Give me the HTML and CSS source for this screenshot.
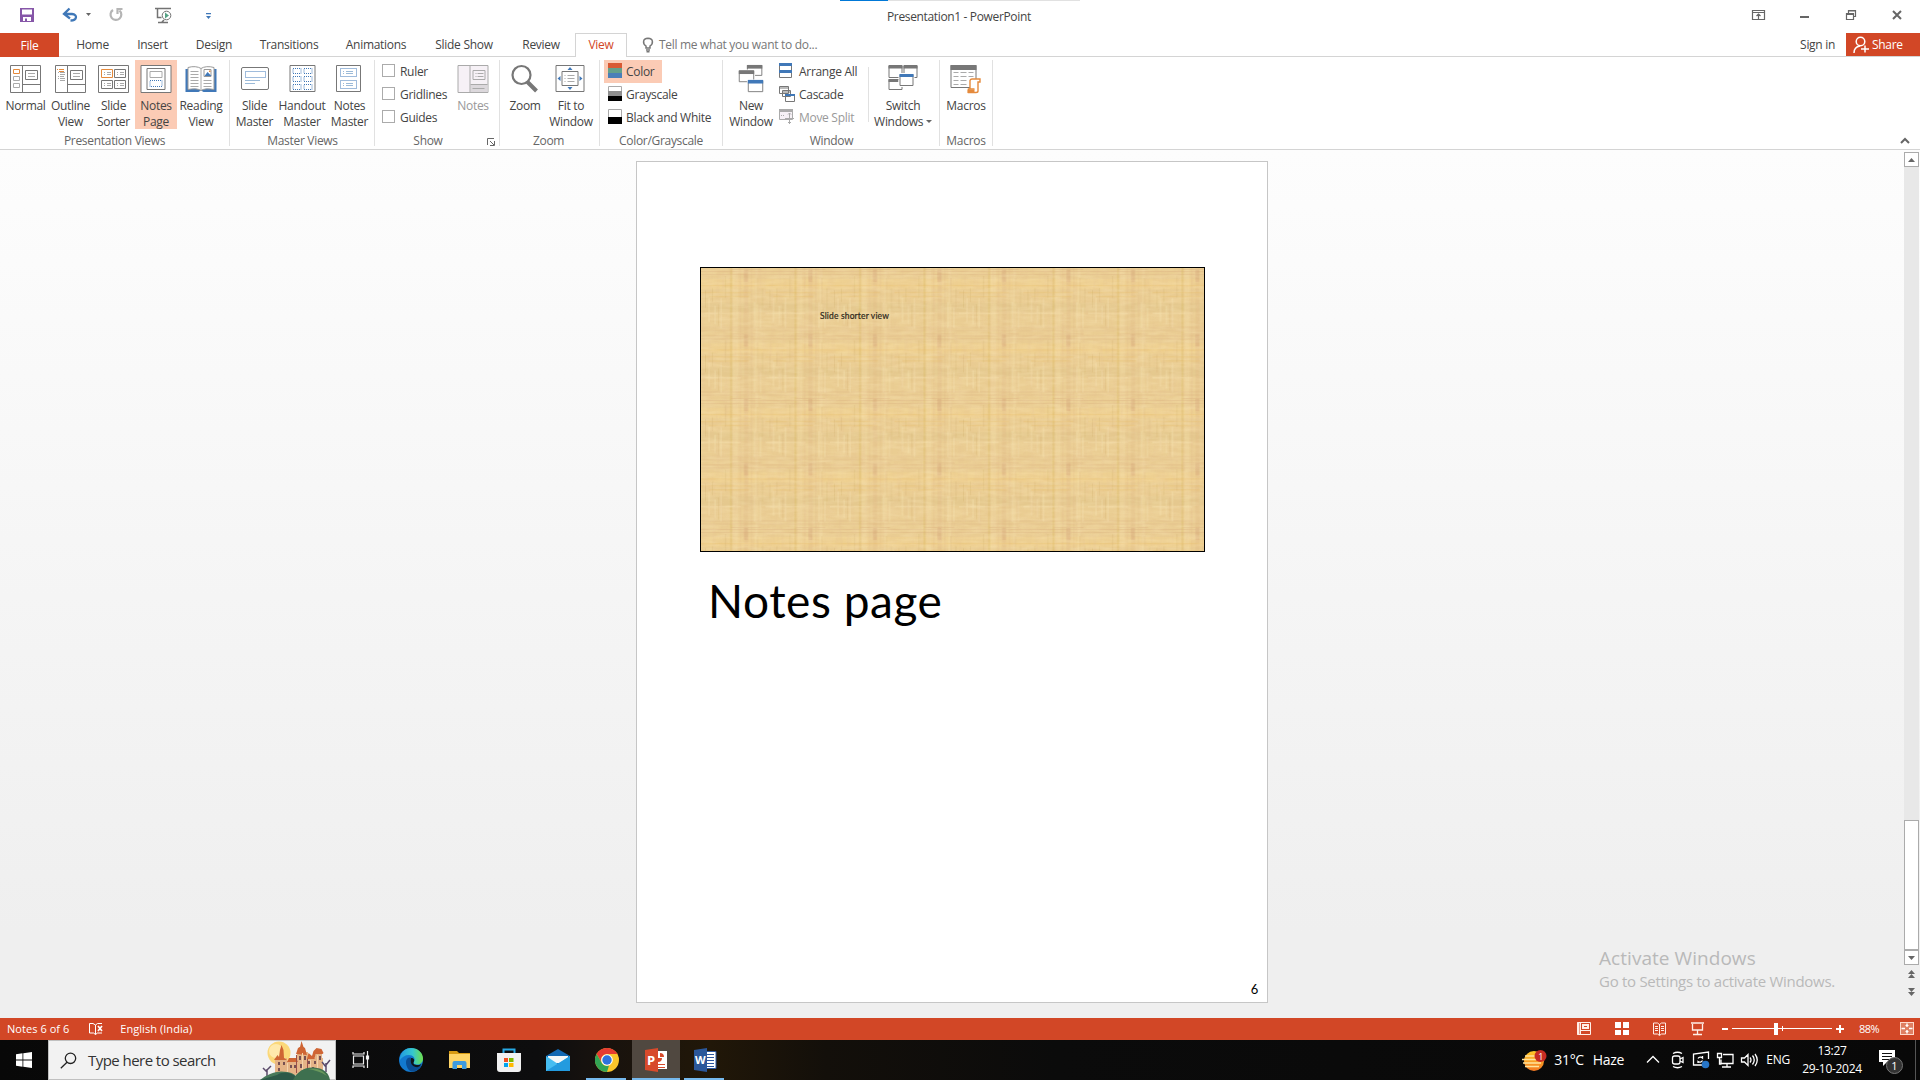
FILE: index.html
```html
<!DOCTYPE html>
<html lang="en">
<head>
<meta charset="utf-8">
<title>Presentation1 - PowerPoint</title>
<link rel="stylesheet" href="styles.css">
</head>
<body>
<div class="app">
  <header class="titlebar">
    <svg class="quick" width="240" height="33" viewBox="0 0 240 33">
      <path fill="#8656a8" fill-rule="evenodd" d="M20 8h14v14H20zM22 9.500v5h10v-5zM23 17v4h2v-2.500h2V21h4v-4z"/>
      <path d="M65 14h7c6 .5 5 6.500-1.500 6.500M69.500 8.500L64 14l6 4.500" fill="none" stroke="#4078b8" stroke-width="2.300"/>
      <path d="M86 13h5l-2.500 3z" fill="#666"/>
      <path d="M113 10a5.400 5.400 0 1 0 6.500 0.500M117.500 14V9h5" fill="none" stroke="#b5b5b5" stroke-width="2.200"/>
      <path d="M155 8.500h16M157.500 9v8.500h4M158 22.500h10M162 22l2-2" fill="none" stroke="#737373" stroke-width="1.500"/>
      <circle cx="166.500" cy="15.500" r="4.300" fill="#fff" stroke="#737373"/><path d="M165 12.500l4 3-4 3z" fill="#56a285"/>
      <path d="M206 13h5v1.200h-5zM206 16h5l-2.500 3z" fill="#4078b8"/>
    </svg>
    <div class="loadbar"><i></i></div>
    <div class="doc-title">Presentation1 - PowerPoint</div>
    <svg class="winbtns" width="170" height="33" viewBox="1750 0 170 33" fill="none" stroke="#666" stroke-width="1.200">
      <path d="M1752.500 10.500h12v9h-12zM1752.500 12.500h12M1758.500 19v-5M1756.500 16l2-2 2 2"/>
      <path d="M1800 17h9" stroke-width="2"/>
      <path d="M1846.500 13.500h7v6h-7zM1846 14.500h8M1848.500 13v-2.500h7v6h-2M1848 11h8"/>
      <path d="M1893 11l8 8M1901 11l-8 8" stroke-width="2"/>
    </svg>
  </header>

  <nav class="tabs">
    <div class="file">File</div>
    <div class="tab w59 first">Home</div><div class="tab w61">Insert</div><div class="tab w62">Design</div><div class="tab w88">Transitions</div><div class="tab w86">Animations</div><div class="tab w90">Slide Show</div><div class="tab w64">Review</div><div class="tab active">View</div>
    <svg class="bulb" width="12" height="16" viewBox="0 0 12 16" fill="none" stroke="#777" stroke-width="1.500"><path d="M4 11V9C.5 6.500.500 1.500 6 1.300c5.500.2 5.500 5.200 2 7.700v2zM4 13h4M4.500 14.700h3"/></svg>
    <span class="tell">Tell me what you want to do...</span>
    <span class="signin">Sign in</span>
    <div class="share"><svg width="17" height="18" viewBox="0 0 17 18" fill="none" stroke="#fff" stroke-width="1.500"><circle cx="7.500" cy="5.500" r="4.300"/><path d="M1 17c0-4 2.500-6.500 6-7M8 13h8M12 9.500v7"/></svg>Share</div>
  </nav>

  <section class="ribbon">
    <div class="group g-views">
      <div class="items">
        <div class="big w47"><svg class="ic" width="31" height="28" viewBox="0 0 31 28"><g fill="none" stroke="#777"><path d="M.5.500h30v27H.5zM12.500 1v26M13 19.500h17"/><path d="M15.500 5.500h12v9h-12z"/><path d="M18 8.500h7M18 11.500h7" stroke="#aaa"/><path d="M3.500 4.500h6v4h-6z" stroke="#e58a3c"/><path d="M3.500 11.500h6v4h-6zM3.500 18.500h6v4h-6z" stroke="#aaa"/></g></svg><span>Normal</span></div>
        <div class="big w43"><svg class="ic" width="31" height="28" viewBox="0 0 31 28"><g fill="none" stroke="#777"><path d="M.5.500h30v27H.5zM12.500 1v26M13 19.500h17M15.500 5.500h12v9h-12z"/><path d="M18 8.500h7M18 11.500h7M3 7.500h1M5 7.500h5M5 9.500h5M3 11.500h1M5 11.500h4M3 13.500h1M5 13.500h5M5 15.500h5" stroke="#aaa"/><path d="M2 4.500h1M4 4.500h5M4 6.500h5" stroke="#e58a3c"/></g></svg><span>Outline<br>View</span></div>
        <div class="big w43"><svg class="ic" width="31" height="28" viewBox="0 0 31 28"><g fill="none" stroke="#777"><path d="M.5.500h30v27H.5zM16.500 4.500h11v8h-11zM3.500 15.500h11v8h-11zM16.500 15.500h11v8h-11z"/><path d="M3.500 4.500h11v8h-11z" stroke="#e58a3c"/><path d="M6 7.500h1M9 7.500h4M6 9.500h1M9 9.500h4M19 7.500h1M22 7.500h4M19 9.500h1M22 9.500h4M6 18.500h1M9 18.500h4M6 20.500h1M9 20.500h4M19 18.500h1M22 18.500h4M19 20.500h1M22 20.500h4" stroke="#aaa"/></g></svg><span>Slide<br>Sorter</span></div>
        <div class="big w42 on half"><svg class="ic" width="31" height="28" viewBox="0 0 31 28"><g fill="#fff" stroke="#777"><path d="M.5.500h30v27H.5z"/><path d="M6.500 3.500h18v21h-18z"/><path d="M9.500 6.500h12v6h-12z" stroke="#aaa"/><path d="M9.500 15.500h12v6h-12z" stroke="#4078b8" stroke-dasharray="1 1"/></g></svg><span>Notes<br>Page</span></div>
        <div class="big w48 half"><svg class="ic" width="31" height="28" viewBox="0 0 31 28"><path d="M0 4h31v23H18l-2.500-1.500L13 27H0z" fill="#4078b8"/><path d="M2.500 2.500c5-1.500 10-1 13 1 3-2 8-2.500 13-1v22c-5-1-10-1-13 1-3-2-8-2-13-1z" fill="#fff" stroke="#999"/><path d="M15.500 3v22M5 6.500h8M5 9.500h8M5 12.500h8M5 15.500h8M5 18.500h8M5 21.500h8M18 15.500h8M18 18.500h8M18 21.500h8" stroke="#aaa"/><path d="M18.500 4.500h7v7h-7z" fill="#fff" stroke="#999"/><path d="M19 11l3-4 4 4z" fill="#4078b8"/><path d="M23.500 5.500h1.500v1.500h-1.500z" fill="#e58a3c"/></svg><span>Reading<br>View</span></div>
      </div><div class="caption views-cap">Presentation Views</div>
    </div>
    <div class="group g-master">
      <div class="items">
        <div class="big w47"><svg class="ic" width="31" height="28" viewBox="0 0 31 28"><g fill="none" stroke="#777"><rect x="2.500" y="2.500" width="27" height="22" rx="1.500"/><path d="M6.500 6.500h20v6h-20z" stroke="#4078b8" stroke-dasharray="1 1"/><path d="M6 15.500h15M6 18.500h10" stroke="#9bbad8"/></g></svg><span>Slide<br>Master</span></div>
        <div class="big w48 half"><svg class="ic" width="31" height="28" viewBox="0 0 31 28"><g fill="none" stroke="#777"><path d="M3.500.500h25v26h-25z"/><path d="M6.500 3.500h8v5h-8zM17.500 3.500h8v5h-8zM6.500 11.500h8v5h-8zM17.500 11.500h8v5h-8zM6.500 19.500h8v5h-8zM17.500 19.500h8v5h-8z" stroke="#4078b8" stroke-dasharray="1 1"/></g></svg><span>Handout<br>Master</span></div>
        <div class="big w47"><svg class="ic" width="31" height="28" viewBox="0 0 31 28"><g fill="none" stroke="#777"><path d="M2.500.500h24v26h-24z"/><path d="M6.500 3.500h16v8h-16zM6.500 15.500h16v8h-16z" stroke="#4078b8" stroke-dasharray="1 1"/><path d="M9 6.500h1M12 6.500h7M9 8.500h1M12 8.500h7M9 18.500h1M12 18.500h7M9 20.500h1M12 20.500h7" stroke="#9bbad8"/></g></svg><span>Notes<br>Master</span></div>
      </div><div class="caption">Master Views</div>
    </div>
    <div class="group g-show">
      <div class="items">
        <div class="checks"><label><i></i>Ruler</label><label><i></i>Gridlines</label><label><i></i>Guides</label></div>
        <div class="big w48 off half"><svg class="ic" width="31" height="28" viewBox="0 0 31 28"><path d="M.5.500h30v27H.5z" fill="#f6f1f6" stroke="#aaa"/><path d="M13 20h17v7H13z" fill="#dcd8dc"/><g fill="none" stroke="#aaa"><path d="M12.500 1v26M13 19.500h17M15.500 5.500h12v9h-12zM18 8.500h1M20 8.500h6M18 11.500h1M20 11.500h6M15 23.500h12"/></g></svg><span>Notes</span></div>
      </div><div class="caption show-cap">Show<svg class="launch" width="8" height="8" viewBox="0 0 8 8" fill="none" stroke="#666"><path d="M.5 7V.500H7M3 3l4 4M7.500 3v4.500H3"/></svg></div>
    </div>
    <div class="group g-zoom">
      <div class="items">
        <div class="big w46 half"><svg class="ic" width="31" height="28" viewBox="0 0 31 28" fill="none" stroke="#777"><circle cx="12" cy="10" r="9" stroke-width="2.200"/><path d="M18 17l9 9" stroke-width="4"/></svg><span>Zoom</span></div>
        <div class="big w46 half"><svg class="ic" width="31" height="28" viewBox="0 0 31 28"><path d="M.5.500h28v26h-28zM6.500 6.500h16v14h-16z" fill="none" stroke="#777"/><path d="M9 10.500h1M12 10.500h7M9 13.500h1M12 13.500h7M9 16.500h1M12 16.500h7" stroke="#aaa"/><path d="M12 5h5l-2.500-3zM12 22h5l-2.500 3zM5 11v5l-3-2.500zM24 11v5l3-2.500z" fill="#4078b8"/></svg><span>Fit to<br>Window</span></div>
      </div><div class="caption">Zoom</div>
    </div>
    <div class="group g-color">
      <div class="items rows">
        <div class="small on"><svg width="14" height="15"><path fill="#d85a34" d="M0 0h14v5H0z"/><path fill="#63a08b" d="M0 5h14v5H0z"/><path fill="#4a7fb8" d="M0 10h14v5H0z"/></svg>Color</div>
        <div class="small"><svg width="14" height="15"><path fill="#fff" stroke="#aaa" d="M.5.500h13v5H.5z"/><path fill="#8e8e8e" d="M0 5h14v5H0z"/><path d="M0 10h14v5H0z"/></svg>Grayscale</div>
        <div class="small"><svg width="14" height="15"><path fill="#fff" stroke="#aaa" d="M.5.500h13v8H.5z"/><path d="M0 8h14v7H0z"/></svg>Black and White</div>
      </div><div class="caption">Color/Grayscale</div>
    </div>
    <div class="group g-window">
      <div class="items">
        <div class="big w54 half"><svg class="ic" width="31" height="31" viewBox="0 0 31 31"><g fill="#fff" stroke="#777"><path d="M11.500.500h16v11h-16z"/><path d="M11 2h17" stroke-width="4"/><path d="M2.500 6.500h16v12h-16z" stroke="#fff" stroke-width="3"/><path d="M2.500 6.500h16v12h-16z"/><path d="M2 8h17" stroke-width="4"/><path d="M12.500 17.500h16v12h-16z" stroke="#fff" stroke-width="3"/><path d="M12.500 17.500h16v12h-16z"/><path d="M12 18.500h17" stroke="#4078b8" stroke-width="4"/></g></svg><span>New<br>Window</span></div>
        <div class="rows winrows">
          <div class="small"><svg width="15" height="15" fill="#fff" stroke="#777"><path d="M.5 0.500h12v14h-12z"/><path d="M0 1.500h13M0 8.500h13" stroke="#4078b8" stroke-width="3"/></svg>Arrange All</div>
          <div class="small"><svg width="16" height="16" fill="#fff" stroke="#777"><path d="M.5.500h9v7h-9zM.5 2h9M3.500 4.500h8v6h-8zM3.500 6h8M6.500 8.500h9v7h-9z"/><path d="M6 9h10" stroke="#4078b8" stroke-width="2"/></svg>Cascade</div>
          <div class="small off"><svg width="16" height="16" fill="#f6f1f6" stroke="#aaa"><path d="M.5.500h13v10H.5z"/><path d="M0 1.500h14" stroke-width="3"/><path d="M10.500 4v11M6 9.500h9M2 6.500h1M4 6.500h1M9 5.500l1.500-1.500 1.500 1.500M9 13l1.500 1.500 1.500-1.500"/></svg>Move Split</div>
        </div>
        <div class="vsep"></div>
        <div class="big w68"><svg class="ic" width="31" height="28" viewBox="0 0 31 28"><g fill="#fff" stroke="#777"><path d="M1.500.500h13v12h-13zM16.500.500h13v12h-13z"/><path d="M1 2h14M16 2h14" stroke-width="3"/><path d="M1.500 14.500h13v10h-13z"/><path d="M1 15.500h10" stroke-width="3"/><path d="M12.500 9.500h13v11h-13z" stroke="#fff" stroke-width="3"/><path d="M12.500 9.500h13v11h-13z"/><path d="M12 10.500h14" stroke="#4078b8" stroke-width="3"/></g></svg><span>Switch<br>Windows <b class="drop"></b></span></div>
      </div><div class="caption">Window</div>
    </div>
    <div class="group g-macros">
      <div class="items"><div class="big w52 half"><svg class="ic" width="31" height="28" viewBox="0 0 31 28"><path d="M.5.500h25v22H.5z" fill="#fff" stroke="#777"/><path d="M0 2.500h26" stroke="#777" stroke-width="5"/><path d="M3 7.500h5M10 7.500h6M18 7.500h5M3 11.500h5M10 11.500h6M18 11.500h5M3 15.500h5M10 15.500h6M3 19.500h5M10 19.500h6" stroke="#aaa"/><path d="M19.500 24V15.500c.5-1.500 1-1.500 2-1.500h8v3h-2v9c0 1-1 1.500-2 1.500h-7.500V24h6" fill="#fff" stroke="#e58a3c" stroke-width="1.400"/><path d="M17 24.500h7V28h-7z" fill="#e58a3c"/></svg><span>Macros</span></div></div>
      <div class="caption">Macros</div>
    </div>
    <svg class="collapse" width="10" height="7" viewBox="0 0 10 7"><path d="M1 6l4-4 4 4" fill="none" stroke="#666" stroke-width="2"/></svg>
  </section>

  <main class="workspace">
    <div class="page">
      <div class="slide">
        <svg class="weave" width="503" height="283">
          <defs>
            <filter id="warp" x="0" y="0" width="100%" height="100%"><feTurbulence type="fractalNoise" baseFrequency=".26 .04" numOctaves="2" seed="4"/><feColorMatrix values="0 0 0 0 .78  0 0 0 0 .53  0 0 0 0 .28  0 1.900 0 0 -.7"/></filter>
            <filter id="weft" x="0" y="0" width="100%" height="100%"><feTurbulence type="fractalNoise" baseFrequency=".06 .28" numOctaves="2" seed="8"/><feColorMatrix values="0 0 0 0 1  0 0 0 0 .86  0 0 0 0 .54  0 2.200 0 0 -.8"/></filter>
            <pattern id="cloth" width="64.500" height="64.500" patternUnits="userSpaceOnUse">
              <path fill="#eacd92" d="M0 0h65v65H0z"/>
              <path fill="#dfc58a" opacity=".5" d="M0 35h65v9H0z"/><path fill="#f5d58e" opacity=".4" d="M0 11h65v10H0z"/>
              <path fill="#dcae80" opacity=".25" d="M43 0h4v65h-4zM39 0h1v65h-1zM50 0h1v65h-1z"/><path fill="#d6b35c" opacity=".35" d="M29 0h2v65h-2z"/><path fill="#f2dda5" opacity=".35" d="M32 0h5v65h-5zM54 0h3v65h-3z"/>
              <path fill="#c98f6a" opacity=".22" d="M43 2h4v12h-4z"/>
              <path fill="none" stroke="#d9a97a" opacity=".3" d="M0 3.500h65M0 6.500h65M0 59.500h65M0 62.500h65M30 1.500h30"/>
              <path fill="none" stroke="#e9b860" opacity=".4" d="M0 17.500h65M0 24.500h50M8 28.500h40"/>
              <path fill="none" stroke="#f6e4b4" opacity=".5" d="M8 30v24M14 38v18M20 30v30M53.500 34v26M59.500 40v20M0 45.500h40"/>
              <path fill="none" stroke="#cfae66" opacity=".3" d="M4.500 22v18M11.500 20v14M17.500 36v22M24.500 8v22M56.500 10v26M61.500 20v20"/>
            </pattern>
          </defs>
          <rect width="503" height="283" fill="url(#cloth)"/>
          <rect width="503" height="283" filter="url(#warp)" opacity=".3"/>
          <rect width="503" height="283" filter="url(#weft)" opacity=".22"/>
        </svg>
        <div class="slide-text">Slide shorter view</div>
      </div>
      <div class="notes">Notes page</div>
      <div class="pagenum">6</div>
    </div>
    <div class="activate"><p class="a1">Activate Windows</p><p class="a2">Go to Settings to activate Windows.</p></div>
    <div class="scroll">
      <div class="sbtn"><svg width="7" height="4"><path d="M0 4l3.500-4L7 4z" fill="#666"/></svg></div>
      <div class="track"></div><div class="thumb"></div>
      <div class="sbtn"><svg width="7" height="4"><path d="M0 0l3.500 4L7 0z" fill="#666"/></svg></div>
      <svg class="pg" width="15" height="34" fill="#666"><path d="M4 9l3.500-4L11 9zM4 13l3.500-4L11 13zM4 23l3.500 4L11 23zM4 27l3.500 4L11 27z"/></svg>
    </div>
  </main>

  <footer class="status">
    <span class="st1">Notes 6 of 6</span>
    <svg class="proof" width="16" height="14" viewBox="0 0 16 14" fill="none" stroke="#fff"><path d="M6.500 12.500l-2-1.500H.500V1.500H4l2.500 1.500zM6.500 12.500l2-1.500H13M6.500 3l2-1.500H13"/><path d="M9 4l4 5M13 4L9 9" stroke-width="1.600"/></svg>
    <span class="st2">English (India)</span>
    <svg class="stright" width="350" height="22" viewBox="1570 0 350 22">
      <g fill="none" stroke="#ffeee7"><path d="M1577.500 4.500h13v12h-13zM1580.500 4v12.500M1581 12.500h10" /><path d="M1583 7h5v3h-5z" stroke-width="2"/><path d="M1578.500 4v13" stroke-width="2"/>
      <path d="M1659.500 6.500l-2-1.500h-4v11h4l2 1.500 2-1.500h4V5h-4zM1659.500 6v11M1655 8.500h3M1655 10.500h3M1655 12.500h3M1661 8.500h3M1661 10.500h3M1661 12.500h3"/>
      <path d="M1691 5h13M1692.500 6v6h10V6M1697.500 12v4M1693 16.500h9" stroke-width="1.300"/></g>
      <path fill="#fff" d="M1615 4h6v6h-6zM1623 4h6v6h-6zM1615 12h6v5h-6zM1623 12h6v5h-6zM1722 10h6v2h-6zM1732 10h100v1h-100zM1774 5h4v12h-4zM1782 8h1v5h-1zM1836 10h8v2h-8zM1839 7h2v8h-2z"/>
      <rect x="1900.500" y="4.500" width="13" height="12" fill="#df7f62" stroke="#ffd9cb"/><path d="M1907 5.500v3.500M1907 12v3.500M1901.500 10.500h3.500M1909 10.500h3.500" stroke="#fff" stroke-width="1.500"/><path d="M1905.500 7.500h3M1905.500 13.500h3" stroke="#fff"/>
    </svg>
    <span class="pct">88%</span>
  </footer>

  <div class="taskbar">
    <div class="start"><svg width="16" height="16" viewBox="0 0 16 16" fill="#fff"><path d="M0 2.200l6.500-.9v6.200H0zM7.300 1.200L16 0v7.500H7.300zM0 8.400h6.500v6.300L0 13.800zM7.300 8.400H16V16l-8.700-1.200z"/></svg></div>
    <div class="search">
      <svg class="mag" width="17" height="17" viewBox="0 0 17 17" fill="none" stroke="#222" stroke-width="1.300"><circle cx="10.500" cy="6.300" r="5.200"/><path d="M7 10.200L.8 16.200"/></svg>
      <span>Type here to search</span>
      <svg class="castle" width="74" height="39" viewBox="0 0 74 39">
        <circle cx="19" cy="12" r="11.500" fill="#fbd879"/><circle cx="16" cy="10" r="7" fill="#ffe9ac"/>
        <path fill="#e5b487" d="M15 17h12v16H15zM27 20h11v14H27zM37 11h11v22H37zM46 17h17v15H46zM39 6h5v9h-5zM55 10h7v12h-7z"/>
        <path fill="#cf6534" d="M14 19l3.500-5 1.500 2 1-7 1.500-5 2 5 .5 8 3 2zM36 13l2-6 2-1 1.500-6 2 6 1.500 1 2 7zM47 18l1.500-6 3.500 3 1.500-5 3-3 5 1 2 4-1 1h-7l-1 5zM27 21l2-4h7l2 4z"/>
        <path fill="#765052" d="M18 21h2v3h-2zM23 21h2v3h-2zM18 27h2v3h-2zM30 24h2v3h-2zM34 24h2v3h-2zM39 15h2v4h-2zM44 15h2v4h-2zM40 23h2v4h-2zM48 20h2v3h-2zM54 20h2v3h-2zM59 15h2v4h-2zM52 26h2v3h-2z"/>
        <path fill="#f4d4ac" d="M27 22h1v9h-1zM42 12h1v20h-1zM57 14h1v16h-1zM50 19h1v12h-1z"/>
        <path fill="#9b4f49" d="M36 14h1v18h-1zM47 18h1v13h-1z"/>
        <path d="M7 37v-9M7 31l-4-4M7 29l4-4M66 31v-9M66 26l-4-5M66 24l4-5" stroke="#5a4a6a" stroke-width="1.500" fill="none"/>
        <path fill="#47795a" d="M0 39c8-6 16-10 27-8 8 1 10 5 12 8z"/><path fill="#2d5948" d="M17 34c8-5 17-2 21 5H0z"/><path fill="#3e704f" d="M33 39c5-10 14-14 24-12 8 1 12 6 13 12z"/><path fill="#68985c" d="M48 28c8-2 15 1 19 7-6-4-12-6-19-7z"/>
      </svg>
    </div>
    <div class="apps">
      <div class="app-i tview"><svg width="18" height="18" viewBox="0 0 18 18" fill="none" stroke="#eee" stroke-width="1.200"><path d="M1.500 5h10v8h-10zM1 1v2h11V1M1 17v-2h11v2M15.500 0v17"/><path fill="#fff" d="M14.500 5h2v3h-2z"/></svg></div>
      <div class="app-i"><svg width="24" height="24" viewBox="0 0 24 24"><defs><linearGradient id="eg"><stop stop-color="#229be0"/><stop offset=".55" stop-color="#35c7cf"/><stop offset="1" stop-color="#70e04a"/></linearGradient></defs><circle cx="12" cy="12" r="12" fill="#1279cf"/><path fill="url(#eg)" d="M1 9C3 3 7 0 12 0c7 0 12 5 12 10.500 0 4-3 6-6 6-2 0-4-.8-3-2.500 2-4-1-7-5-7-4 0-7 2-9 5z"/><path fill="#0b4d93" d="M7 14c0-3 2-5 5-4.500-2 4 1 8.500 5 9 2 .3 4-.5 5.500-1C20 22 16 24 12 23.500 9 22 7 18 7 14z"/><path fill="#10151a" d="M12 10c3 0 4 2 2.600 4.200-.8 1.700 1 3 4 2.800 2 0 3-.5 4-1-2 3-4 3.500-6 3-4-1-6-5-4.600-9z"/></svg></div>
      <div class="app-i"><svg width="23" height="20" viewBox="0 0 23 20"><path fill="#d89b13" d="M1 1h8l2 2h11v5H1z"/><path fill="#ffd567" d="M1 4h21v14H1z"/><path fill="#3d9be0" d="M4.500 19v-6q0-2 2-2h10q2 0 2 2v6H14v-4H9v4z"/></svg></div>
      <div class="app-i"><svg width="24" height="24" viewBox="0 0 24 24"><path d="M6.500 6V1.500h11V6" fill="none" stroke="#27a9e5" stroke-width="2"/><path d="M0 5h24v16q0 3-3 3H3q-3 0-3-3z" fill="#f1f1f1"/><path fill="#f25022" d="M7 10h4v4H7z"/><path fill="#7fba00" d="M12 10h4.500v4H12z"/><path fill="#00a4ef" d="M7 15h4v4H7z"/><path fill="#ffb900" d="M12 15h4.500v4H12z"/></svg></div>
      <div class="app-i"><svg width="24" height="22" viewBox="0 0 24 22"><path fill="#1268b3" d="M0 7l12-7 12 7v14H0z"/><path fill="#f4f7f8" d="M2 7h20v7H2z"/><path fill="#46bdf1" d="M0 7l12 8 12-8v15H0z"/><path fill="#239bdf" d="M0 22L24 7v15z"/></svg></div>
      <div class="app-i run"><svg width="24" height="24" viewBox="0 0 24 24"><circle cx="12" cy="12" r="12" fill="#fac52b"/><path fill="#e63c31" d="M1.600 6A12 12 0 0 1 22.400 6H12a6 6 0 0 0-5.200 9z"/><path fill="#32a454" d="M1.600 6l5.200 9A6 6 0 0 0 12 18l2-.4L12 24A12 12 0 0 1 1.600 6z"/><circle cx="12" cy="12" r="5.800" fill="#fff"/><circle cx="12" cy="12" r="4.700" fill="#2f73dc"/></svg></div>
      <div class="app-i current"><svg width="24" height="24" viewBox="0 0 24 24"><path fill="#fff" d="M12 3h11v18H12z"/><path fill="#d74a2b" d="M14 16h7v1h-7zM14 19h7v1h-7zM14 6a4 4 0 1 0 4 4h-4zM16 5v4h4q0-4-4-4z"/><path fill="#d74a2b" d="M1 2l13-2v24L1 22z"/><text x="3" y="17" class="logo">P</text></svg></div>
      <div class="app-i run word"><svg width="24" height="24" viewBox="0 0 24 24"><path fill="#fff" stroke="#2c569f" d="M12 3.500h11v17H12z"/><path stroke="#2c569f" d="M14 6.500h7M14 9.500h7M14 12.500h7M14 15.500h7M14 18.500h7"/><path fill="#2b579a" d="M1 2l13-2v24L1 22z"/><text x="2" y="16" class="logo w">W</text></svg></div>
    </div>
    <div class="tray">
      <svg class="weather" width="26" height="24" viewBox="0 0 26 24"><defs><linearGradient id="sun" x2="0" y2="1"><stop stop-color="#ffc928"/><stop offset="1" stop-color="#f37822"/></linearGradient></defs><circle cx="12" cy="13" r="10" fill="url(#sun)"/><path d="M3 8h10M0 11.500h19M1 15h18M3 18.500h14" stroke="#ffe39c" stroke-width="1.500"/><circle cx="18.500" cy="8" r="6" fill="#c62c24"/><text x="16.200" y="11.500" class="badge">1</text></svg>
      <span class="temp">31°C</span><span class="haze">Haze</span>
      <svg class="sys" width="115" height="20" viewBox="1645 0 115 20" fill="none" stroke="#fff" stroke-width="1.300"><path d="M1647 12.500l6-6 6 6"/><rect x="1672.500" y="6" width="7.500" height="8" rx="2"/><path d="M1680 9l3-1.500v5l-3-1.500M1673 3.500q4.500-2.500 9 0M1673 16.500q4.500 2.500 9 0"/><path d="M1704 15h-10.500V4l15-2v7M1698 8.500a3 3 0 0 1 4.500-.5V6M1702.500 10.500a3 3 0 0 1-4.500 1v1.500"/><circle cx="1705.500" cy="14.500" r="3.800" fill="#2776c8" stroke="none"/><path d="M1723 4.500h10v9h-12v-4M1727 14v3M1722 17h9M1717.500 3.500h4v4h-4zM1719.500 8v6h2"/><path d="M1741.500 8v4h3l3.500 3.500v-11L1744.500 8zM1750 7.500q2 2.500 0 5M1752.500 5.500q3.500 4.500 0 9M1755 4q4.500 6 0 12"/></svg>
      <span class="eng">ENG</span>
      <div class="clock">13:27<br>29-10-2024</div>
      <svg class="notif" width="26" height="26" viewBox="0 0 26 26"><path fill="#fff" d="M0 1h16v12H8l-4 4v-4H0z"/><path stroke="#111" d="M3 4.500h10M3 7.500h10M3 10.500h7"/><circle cx="15.500" cy="16.500" r="8" fill="#333" stroke="#777"/><text x="12.300" y="21" class="count">1</text></svg>
      <i class="peek"></i>
    </div>
  </div>
</div>
</body>
</html>
```
FILE: styles.css
```css
* { box-sizing: border-box; }
body { margin: 0; background: #fff; font: 12px/16px "Open Sans", "Noto Sans", sans-serif; color: #444; letter-spacing: -0.3px; overflow: hidden; }
svg { display: block; flex: none; }
p { margin: 0; }
.app { width: 1920px; height: 1080px; display: flex; flex-direction: column; white-space: nowrap; }

.titlebar { height: 33px; display: flex; position: relative; }
.loadbar { position: absolute; left: 840px; top: 0; width: 240px; height: 1px; background: #e1e1e1; }
.loadbar i { display: block; width: 48px; height: 1px; background: #0078d7; }
.doc-title { margin-left: 647px; padding-top: 9px; letter-spacing: -0.35px; }
.winbtns { margin-left: auto; }

.tabs { height: 24px; display: flex; border-bottom: 1px solid #d4d4d4; }
.file { width: 59px; height: 24px; background: #d24726; color: #fff; text-align: center; line-height: 26px; }
.tab { text-align: center; line-height: 24px; }
.first { margin-left: 4px; }
.w59 { width: 59px; } .w61 { width: 61px; } .w62 { width: 62px; } .w88 { width: 88px; } .w86 { width: 86px; } .w90 { width: 90px; } .w64 { width: 64px; }
.tab.active { width: 52px; height: 24px; margin-left: 2px; line-height: 22px; color: #d24726; background: #fff; border: 1px solid #d4d4d4; border-bottom: 0; }
.bulb { margin: 4px 5px 0 15px; }
.tell { color: #777; line-height: 24px; }
.signin { margin-left: auto; margin-right: 11px; line-height: 24px; }
.share { width: 74px; height: 23px; background: #d24726; color: #fff; display: flex; align-items: center; padding-left: 7px; gap: 2px; }

.ribbon { height: 93px; display: flex; align-items: flex-start; padding-top: 3px; border-bottom: 1px solid #d4d4d4; }
.group { height: 86px; border-right: 1px solid #e1e1e1; display: flex; flex-direction: column; }
.items { height: 73px; display: flex; }
.caption { text-align: center; line-height: 16px; color: #666; height: 13px; position: relative; }
.g-views { width: 230px; padding-left: 2px; }
.views-cap { margin-left: -2px; }
.g-master { width: 145px; padding-left: 1px; }
.g-show { width: 125px; padding-left: 7px; }
.g-zoom { width: 100px; padding-left: 2px; }
.g-zoom .caption { margin-left: -4px; }
.g-color { width: 123px; padding-left: 4px; }
.g-color .caption { margin-left: -4px; }
.g-window { width: 217px; padding-left: 1px; }
.g-macros { width: 53px; }
.big { display: flex; flex-direction: column; align-items: center; text-align: center; height: 69px; padding-top: 5px; }
.big .ic { margin-bottom: 5px; height: 28px; overflow: visible; }
/* odd icon in an even cell: keep its strokes on whole pixels */
.half .ic { transform: translateX(-0.5px); }
.w42 { width: 42px; } .w43 { width: 43px; } .w46 { width: 46px; } .w47 { width: 47px; } .w48 { width: 48px; } .w52 { width: 52px; } .w54 { width: 54px; } .w68 { width: 68px; }
.on { background: #fbcbb5; }
.off { color: #999; }
.checks { width: 67px; display: flex; flex-direction: column; }
.checks label { height: 23px; display: flex; align-items: center; gap: 5px; }
.checks i { width: 13px; height: 13px; border: 1px solid #ababab; background: #fff; margin-top: -2px; }
.show-cap { margin-left: -7px; padding-right: 18px; }
.launch { position: absolute; right: 4px; top: 5px; }
.rows { display: flex; flex-direction: column; align-items: flex-start; }
.small { height: 23px; display: flex; align-items: center; gap: 4px; padding: 1px 8px 0 4px; }
.small svg { margin-top: -3px; }
.winrows { padding-left: 1px; width: 90px; }
.winrows .small { gap: 4px; padding: 1px 0 0; }
.winrows .small svg { width: 16px; }
.vsep { width: 1px; height: 55px; margin-top: 7px; background: #e1e1e1; }
.drop { display: inline-block; border: 3px solid transparent; border-top-color: #666; border-bottom: 0; vertical-align: 3px; }
.w68 .ic { transform: translateX(-0.5px); }
.collapse { margin: 77px 10px 0 auto; }

.workspace { height: 868px; display: flex; background: linear-gradient(#fdfdfd, #efefef 90%); position: relative; }
.page { width: 632px; height: 842px; margin: 11px 0 0 636px; border: 1px solid #c6c6c6; background: #fff; padding: 105px 63px 0; color: #000; display: flex; flex-direction: column; }
.slide { width: 505px; height: 285px; border: 1px solid #000; position: relative; flex: none; }
.slide-text { position: absolute; left: 119px; top: 39px; font: 8.500px/18px Lato, sans-serif; letter-spacing: 0.15px; color: #2d281c; -webkit-text-stroke: 0.2px #2d281c; }
.notes { font: 46px/60px Lato, sans-serif; letter-spacing: 0.55px; padding: 19px 0 0 8px; }
.pagenum { margin: auto -54px 4px auto; font: 13px/18px Lato, sans-serif; }
.activate { position: absolute; left: 1599px; top: 796px; color: #b9b9b9; }
.a1 { font-size: 19px; line-height: 25px; letter-spacing: 0.05px; }
.a2 { font-size: 15px; line-height: 20px; letter-spacing: -0.28px; }
.scroll { width: 16px; margin-left: auto; padding-top: 2px; display: flex; flex-direction: column; }
.sbtn { width: 15px; height: 15px; border: 1px solid #ababab; background: #fff; display: flex; align-items: center; justify-content: center; }
.track { width: 15px; height: 653px; background: #e8e8e8; }
.thumb { width: 15px; height: 130px; border: 1px solid #ababab; background: #fff; }

.status { height: 22px; display: flex; align-items: center; background: #d24726; color: #fff; font-size: 11px; padding-left: 7px; letter-spacing: 0.05px; position: relative; }
.proof { margin-left: 20px; }
.st2 { margin-left: 15px; }
.stright { margin-left: auto; }
.pct { position: absolute; left: 1859px; letter-spacing: -0.5px; }

.taskbar { height: 40px; display: flex; background: linear-gradient(90deg, #080808, #0d0d0e 28%, #17120e 31%, #211708 37%, #130f0a 43%, #0b0b0b 55%, #080808); color: #fff; }
.start { width: 48px; padding: 12px 16px; }
.search { width: 288px; display: flex; align-items: center; background: #f2f2f2; border: 1px solid #c0c0c0; color: #333; font-size: 15px; letter-spacing: -0.55px; padding-left: 11px; }
.search span { margin-left: 11px; }
.castle { margin-left: auto; margin-right: 1px; }
.apps { display: flex; padding-left: 1px; }
.app-i { width: 49px; height: 40px; display: flex; align-items: center; justify-content: center; position: relative; }
.tview { padding-right: 2px; }
.run::after, .current::after { content: ""; position: absolute; left: 4px; right: 5px; bottom: 0; height: 2px; background: #76b9ed; }
.current { background: #504840; width: 48px; margin-left: 1px; }
.current::after { left: 0; right: 0; }
.logo { font: bold 13px "Open Sans", sans-serif; fill: #fff; }
.logo.w { font-size: 11px; }
.tray { margin-left: auto; display: flex; align-items: center; font-size: 14px; }
.temp { margin-left: 6px; }
.haze { margin-left: 9px; }
.sys { margin-left: 21px; }
.eng { font-size: 12px; margin-left: 6px; letter-spacing: -0.2px; }
.clock { width: 60px; text-align: center; font-size: 12px; line-height: 18px; margin-left: 12px; }
.notif { margin: 3px 10px 0 17px; }
.peek { width: 1px; height: 40px; background: #555; margin-right: 4px; }
.badge { font: 9px "Open Sans", sans-serif; fill: #fff; }
.count { font: 11px "Open Sans", sans-serif; fill: #fff; }
```
